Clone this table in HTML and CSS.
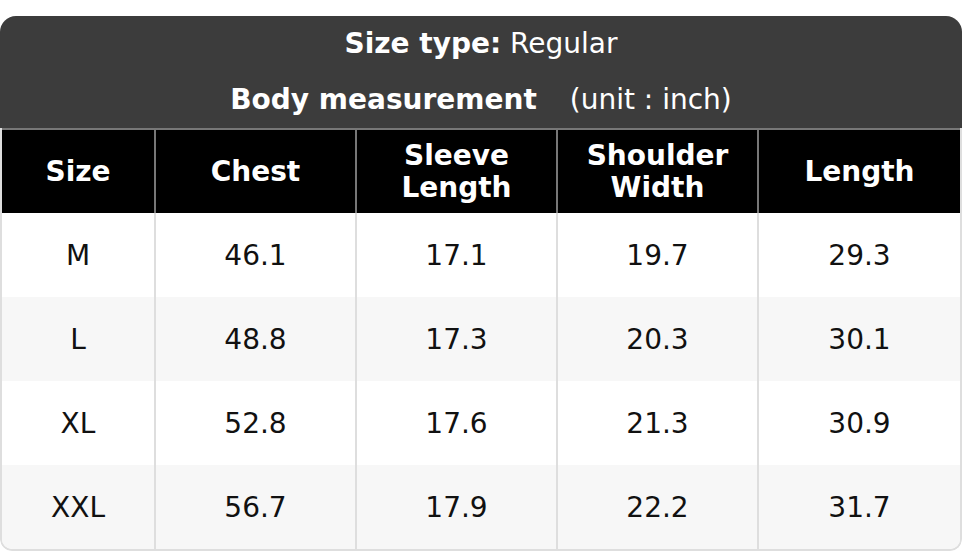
FILE: index.html
```html
<!DOCTYPE html>
<html>
<head>
<meta charset="utf-8">
<link rel="stylesheet" href="styles.css">
</head>
<body>
<div class="card">
  <div class="title">
    <div class="title-line"><b>Size type:</b> Regular</div>
    <div class="title-line"><b>Body measurement</b><span class="unit">(unit : inch)</span></div>
  </div>
  <div class="table-wrap">
    <table class="size-table">
      <colgroup>
        <col class="c-size">
        <col class="c-val">
        <col class="c-val">
        <col class="c-val">
        <col>
      </colgroup>
      <thead>
        <tr>
          <th>Size</th>
          <th>Chest</th>
          <th>Sleeve<br>Length</th>
          <th>Shoulder<br>Width</th>
          <th>Length</th>
        </tr>
      </thead>
      <tbody>
        <tr><td>M</td><td>46.1</td><td>17.1</td><td>19.7</td><td>29.3</td></tr>
        <tr><td>L</td><td>48.8</td><td>17.3</td><td>20.3</td><td>30.1</td></tr>
        <tr><td>XL</td><td>52.8</td><td>17.6</td><td>21.3</td><td>30.9</td></tr>
        <tr><td>XXL</td><td>56.7</td><td>17.9</td><td>22.2</td><td>31.7</td></tr>
      </tbody>
    </table>
  </div>
</div>
</body>
</html>
```

FILE: styles.css
```css
html, body {
  margin: 0;
  padding: 0;
  background: #fff;
}
body {
  padding-top: 16px;
  font-family: "DejaVu Sans", sans-serif;
  color: #111;
}
.card {
  width: 962px;
  border-radius: 16px 16px 12px 12px;
  overflow: hidden;
}
.title {
  background: #3c3c3c;
  color: #fff;
  text-align: center;
  font-size: 28px;
}
.title-line {
  height: 56px;
  line-height: 56px;
}
.unit {
  margin-left: 33px;
}
.table-wrap {
  border: 2px solid #dedede;
  border-top: none;
  border-radius: 0 0 12px 12px;
  overflow: hidden;
}
.size-table {
  width: 100%;
  border-collapse: collapse;
  table-layout: fixed;
}
.c-size { width: 153px; }
.c-val { width: 201px; }
.size-table th {
  background: #000;
  color: #fff;
  font-weight: bold;
  font-size: 28px;
  line-height: 32px;
  height: 84px;
  padding: 0;
  border: 2px solid #777;
  border-bottom: none;
  box-sizing: border-box;
}
.size-table th:first-child { border-left: none; }
.size-table th:last-child { border-right: none; }
.size-table td {
  text-align: center;
  font-size: 28px;
  height: 84px;
  padding: 0;
  border-left: 2px solid #dedede;
  border-right: 2px solid #dedede;
}
.size-table td:first-child { border-left: none; }
.size-table td:last-child { border-right: none; }
.size-table tbody tr:nth-child(even) td {
  background: #f7f7f7;
}
```
